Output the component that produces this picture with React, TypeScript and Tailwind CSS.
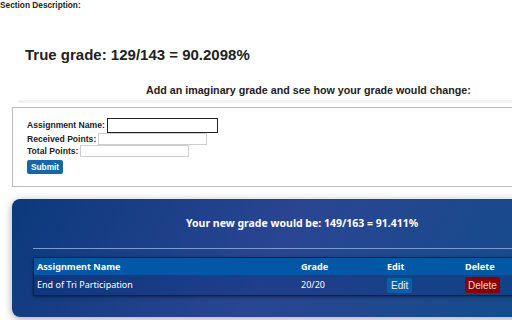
import React from "react"

interface Row {
  name: string
  grade: string
}

const rows: Row[] = [{ name: "End of Tri Participation", grade: "20/20" }]

export default function App() {
  return (
    <div className="w-[512px] h-[320px] overflow-hidden bg-white text-[#222] font-['Liberation_Sans',Arial,sans-serif]">
      <p className="pt-[1px] text-[8.3px] leading-[9px] font-bold">Section Description:</p>

      <h2 className="mt-[36px] ml-[25px] text-[15px] leading-[18px] font-bold whitespace-nowrap">
        True grade: 129/143 = 90.2098%
      </h2>

      <h3 className="mt-[19px] ml-[146px] text-[10.7px] leading-[14px] font-bold whitespace-nowrap">
        Add an imaginary grade and see how your grade would change:
      </h3>

      <div className="mt-[3px] ml-[18px] h-[3px] bg-[#f2f2f2]" />

      <div className="mt-[4px] ml-[12px] w-[520px] border border-[#bdbdbd] pt-[9px] pb-[12px] pl-[14px] text-[8.6px] font-bold leading-[10px]">
        <div className="flex h-[16px] items-center gap-[2px]">
          <span>Assignment Name:</span>
          <input className="h-[15px] w-[111px] border-[1.5px] border-[#222] bg-white outline-none" />
        </div>
        <div className="flex h-[12px] items-center gap-[2px]">
          <span>Received Points:</span>
          <input className="h-[12px] w-[109px] border border-[#cfcfcf] bg-white outline-none" />
        </div>
        <div className="flex h-[12px] items-center gap-[2px]">
          <span>Total Points:</span>
          <input className="h-[12px] w-[109px] border border-[#cfcfcf] bg-white outline-none" />
        </div>
        <button className="mt-[3px] h-[14px] rounded-[2px] bg-[#1766aa] px-[4px] text-[8.3px] font-bold text-white">
          Submit
        </button>
      </div>

      <div className="mt-[12px] ml-[12px] w-[520px] rounded-[8px] bg-[linear-gradient(120deg,#0b397c_0%,#2a4592_50%,#134c8b_100%)] pt-[17px] pb-[21px] pl-[21px] shadow-[0_2px_8px_rgba(0,0,0,0.35)] font-['Noto_Sans','Open_Sans',sans-serif] text-white">
        <p className="pl-[153px] text-[10.5px] leading-[14px] font-bold whitespace-nowrap">
          Your new grade would be: 149/163 = 91.411%
        </p>
        <div className="mt-[18px] h-[1px] bg-[#7d9bd0]" />
        <div className="mt-[8px] border border-[#0a2452] shadow-[0_1px_3px_rgba(0,0,0,0.45)]">
          <div className="grid h-[17px] grid-cols-[263px_86px_78px_1fr] items-center bg-[#0257a6] text-[9.1px] font-bold">
            <span className="pl-[3px]">Assignment Name</span>
            <span className="pl-[4px]">Grade</span>
            <span className="pl-[4px]">Edit</span>
            <span className="pl-[4px]">Delete</span>
          </div>
          {rows.map((r) => (
            <div
              key={r.name}
              className="grid h-[20px] grid-cols-[263px_86px_78px_1fr] items-center bg-[#0a2f78]/30 text-[9px]"
            >
              <span className="pl-[3px]">{r.name}</span>
              <span className="pl-[4px]">{r.grade}</span>
              <span className="pl-[4px]">
                <button className="h-[15px] rounded-[2px] bg-[#0b5ea8] px-[4px] font-['Liberation_Sans',Arial,sans-serif] text-[10px] text-[#f0f0f0]">
                  Edit
                </button>
              </span>
              <span className="pl-[4px]">
                <button className="h-[16px] rounded-[2px] bg-[#880000] px-[3px] font-['Liberation_Sans',Arial,sans-serif] text-[10px] text-[#f4dada]">
                  Delete
                </button>
              </span>
            </div>
          ))}
        </div>
      </div>
    </div>
  )
}
